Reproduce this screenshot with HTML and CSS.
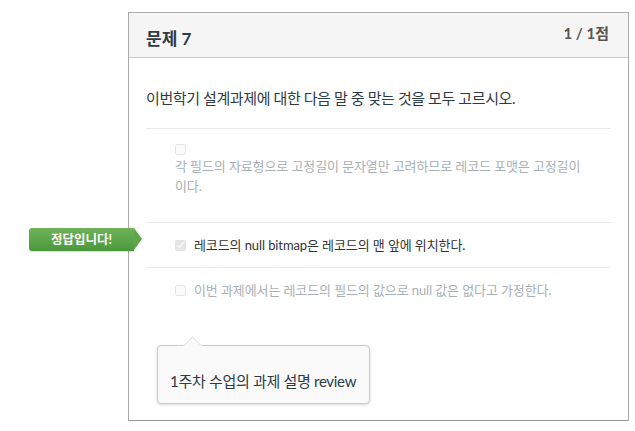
FILE: index.html
```html
<!DOCTYPE html>
<html lang="ko">
<head>
<meta charset="utf-8">
<title>문제 7</title>
<link rel="stylesheet" href="styles.css">
</head>
<body>

<div class="quiz">
  <div class="question">
    <div class="question-header">
      <span class="question-name">문제 7</span>
      <span class="question-points">1 / 1점</span>
    </div>

    <div class="question-body">
      <div class="question-text">이번학기 설계과제에 대한 다음 말 중 맞는 것을 모두 고르시오.</div>

      <div class="answers">
        <div class="answer answer-stacked">
          <input type="checkbox" disabled>
          <div class="answer-text">각 필드의 자료형으로 고정길이 문자열만 고려하므로 레코드 포맷은 고정길이이다.</div>
        </div>

        <div class="answer selected">
          <span class="answer-arrow">정답입니다!</span>
          <input type="checkbox" checked disabled>
          <div class="answer-text">레코드의 null bitmap은 레코드의 맨 앞에 위치한다.</div>
        </div>

        <div class="answer">
          <input type="checkbox" disabled>
          <div class="answer-text">이번 과제에서는 레코드의 필드의 값으로 null 값은 없다고 가정한다.</div>
        </div>
      </div>

      <div class="quiz-comment">
        <div class="comment-text">1주차 수업의 과제 설명 review</div>
      </div>
    </div>
  </div>
</div>

</body>
</html>
```

FILE: styles.css
```css
body {
  margin: 0;
  font-family: Lato, "Noto Sans CJK KR", sans-serif;
  color: #2d3b45;
  background-color: white;
}

.quiz {
  padding: 12px 0 0 128px;
}

.question {
  width: 501px;
  box-sizing: border-box;
  border: 1px solid #aaa;
  border-bottom-color: #999;
}

.question-header {
  display: flex;
  justify-content: space-between;
  align-items: center;
  height: 44px;
  padding: 0 19px 0 17px;
  background-color: #f5f5f5;
  border-bottom: 1px solid #c7cdd1;
}

.question-name {
  font-size: 17px;
  font-weight: bold;
  color: #2d3b45;
  margin-top: 4px;
}

.question-points {
  font-size: 15px;
  font-weight: bold;
  color: #555;
  margin-top: -6px;
}

.question-body {
  padding: 0 17px 16px;
}

.question-text {
  font-size: 15px;
  line-height: 20px;
  letter-spacing: -0.4px;
  padding: 30px 0 20px;
}

.answer {
  position: relative;
  display: flex;
  align-items: center;
  gap: 8px;
  padding: 12px 0 12px 29px;
  border-top: 1px solid #e8eaec;
  font-size: 13px;
  line-height: 20px;
  letter-spacing: -0.1px;
  color: #a9b0b5;
}

.answer input {
  width: 11px;
  height: 11px;
  margin: 0;
  flex-shrink: 0;
  opacity: 0.55;
}

.answer-stacked {
  display: block;
  padding: 15px 25px 26px 29px;
}

.answer-stacked input {
  display: block;
  margin-bottom: 1px;
}

.answer.selected {
  color: #333;
}

/* green "correct" flag hanging off the left edge of the card */
.answer-arrow {
  position: absolute;
  right: calc(100% + 12px);
  top: 5px;
  width: 105px;
  height: 23px;
  line-height: 23px;
  text-align: center;
  font-size: 12.5px;
  font-weight: bold;
  letter-spacing: 0;
  color: white;
  border-radius: 3px 0 0 3px;
  background: linear-gradient(#6fb25a, #4b993c);
  box-shadow: 0 1px 1px rgba(0, 0, 0, 0.15);
}

.answer-arrow::after {
  content: "";
  position: absolute;
  left: 100%;
  top: 0;
  border-top: 11.5px solid transparent;
  border-bottom: 11.5px solid transparent;
  border-left: 8px solid #5da64a;
}

.quiz-comment {
  position: relative;
  width: 213px;
  box-sizing: border-box;
  margin: 33px 0 0 11px;
  padding: 25px 12px 12px;
  background-color: #fafafa;
  border: 1px solid #c7cdd1;
  border-radius: 4px;
  box-shadow: 0 1px 3px rgba(0, 0, 0, 0.15);
}

.quiz-comment::before {
  content: "";
  position: absolute;
  left: 28px;
  top: -7px;
  width: 12px;
  height: 12px;
  background-color: #fafafa;
  border-top: 1px solid #e3e5e7;
  border-left: 1px solid #e3e5e7;
  transform: rotate(45deg);
}

.comment-text {
  font-size: 15px;
  line-height: 20px;
  letter-spacing: -0.3px;
  color: #2d3b45;
}
```
